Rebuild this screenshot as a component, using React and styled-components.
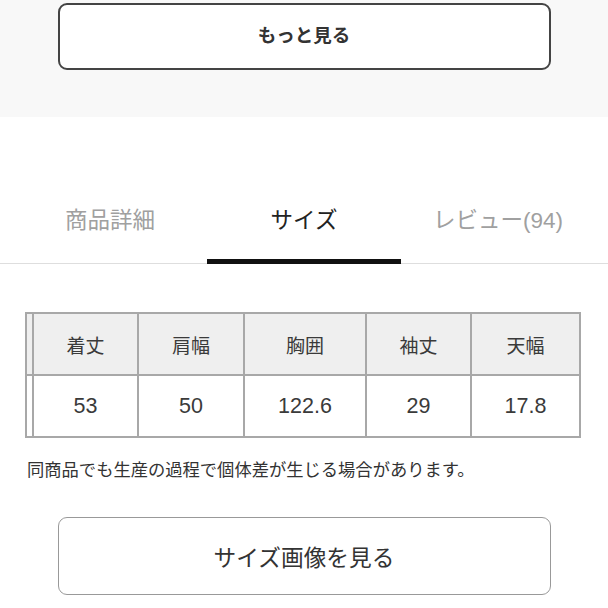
import React from "react";
import styled, { createGlobalStyle } from "styled-components";

const GlobalStyle = createGlobalStyle`
  html, body {
    margin: 0;
    padding: 0;
    background: #fff;
  }
  body {
    font-family: "Liberation Sans", "Noto Sans CJK JP", sans-serif;
    color: #333;
  }
`;

const tabs = ["商品詳細", "サイズ", "レビュー(94)"];
const heads = ["着丈", "肩幅", "胸囲", "袖丈", "天幅"];
const values = ["53", "50", "122.6", "29", "17.8"];

const App = () => (
  <Page>
    <GlobalStyle />
    <MoreSection>
      <MoreButton>もっと見る</MoreButton>
    </MoreSection>

    <TabBar>
      {tabs.map((t, i) => (
        <Tab key={t} active={i === 1}>
          {t}
        </Tab>
      ))}
    </TabBar>

    <Content>
      <SizeTable>
        <Cell head />
        {heads.map((h) => (
          <Cell head key={h}>
            {h}
          </Cell>
        ))}
        <Cell />
        {values.map((v, i) => (
          <Cell key={i} num>
            {v}
          </Cell>
        ))}
      </SizeTable>

      <Note>同商品でも生産の過程で個体差が生じる場合があります。</Note>

      <ImageButton>サイズ画像を見る</ImageButton>
    </Content>
  </Page>
);

export default App;

const Page = styled.div`
  width: 608px;
  height: 608px;
  overflow: hidden;
`;

const MoreSection = styled.section`
  height: 117px;
  background: #f8f8f8;
  padding-top: 3px;
  box-sizing: border-box;
  display: flex;
  justify-content: center;
`;

const MoreButton = styled.button`
  width: 493px;
  height: 67px;
  box-sizing: border-box;
  border: 2px solid #444;
  border-radius: 9px;
  background: #fff;
  font-family: "Noto Sans CJK JP", sans-serif;
  font-weight: 700;
  font-size: 18.5px;
  color: #333;
  padding: 0 0 5px;
`;

const TabBar = styled.nav`
  margin-top: 62px;
  padding: 0 13px;
  display: flex;
  border-bottom: 1px solid #dedede;
`;

const Tab = styled.div`
  position: relative;
  width: 194px;
  height: 84px;
  padding-top: 27px;
  box-sizing: border-box;
  text-align: center;
  font-size: 22.5px;
  line-height: 30px;
  font-family: "Liberation Sans", "Noto Sans CJK JP", sans-serif;
  color: ${(p) => (p.active ? "#222" : "#a0a0a0")};

  &::after {
    content: "";
    display: ${(p) => (p.active ? "block" : "none")};
    position: absolute;
    left: 0;
    right: 0;
    bottom: -1px;
    height: 5px;
    background: #111;
  }
`;

const Content = styled.div`
  display: flex;
  flex-direction: column;
  align-items: flex-start;
`;

const SizeTable = styled.div`
  margin: 48px 0 0 25px;
  display: grid;
  grid-template-columns: 5px 103px 104px 120px 103px 107px;
  grid-auto-rows: 60px;
  gap: 2px;
  padding: 2px;
  background: #a8a8a8;
`;

const Cell = styled.div`
  display: flex;
  align-items: center;
  justify-content: center;
  background: ${(p) => (p.head ? "#efefef" : "#fff")};
  font-size: ${(p) => (p.num ? "21.5px" : "19px")};
  color: #3a3a3a;
  font-family: "Liberation Sans", "Noto Sans CJK JP", sans-serif;
`;

const Note = styled.p`
  margin: 19px 0 0 27px;
  font-size: 17.3px;
  line-height: 24px;
  color: #333;
  font-family: "Noto Sans CJK JP", sans-serif;
`;

const ImageButton = styled.button`
  align-self: center;
  margin-top: 36px;
  width: 493px;
  height: 78px;
  box-sizing: border-box;
  border: 1.5px solid #999;
  border-radius: 9px;
  background: #fff;
  font-family: "Noto Sans CJK JP", sans-serif;
  font-size: 22.7px;
  color: #333;
  padding: 0;
`;
